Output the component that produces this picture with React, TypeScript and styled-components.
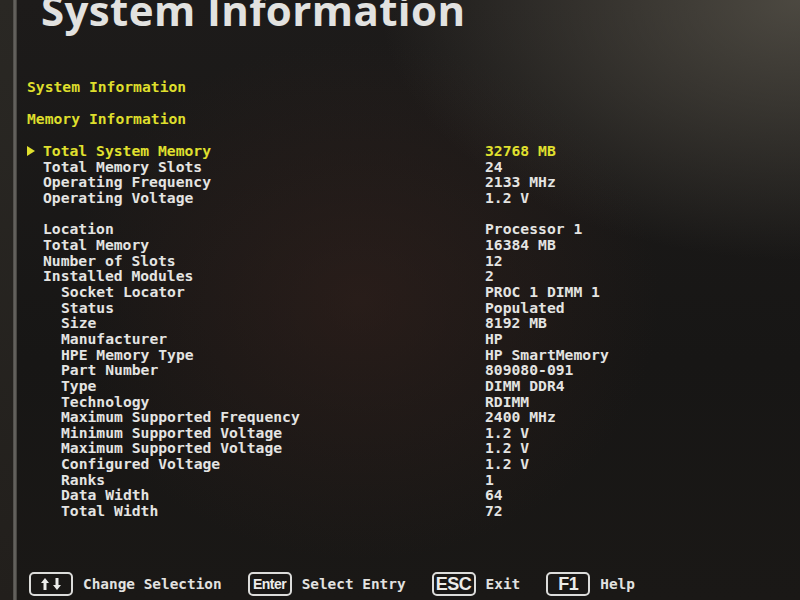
import styled, { createGlobalStyle } from "styled-components";

const GlobalStyle = createGlobalStyle`
  html, body {
    margin: 0;
    padding: 0;
    background: #141312;
    overflow: hidden;
  }
`;

const Screen = styled.div`
  display: flex;
  width: 800px;
  height: 600px;
  overflow: hidden;
  background:
    radial-gradient(ellipse 420px 260px at 800px 0px, rgba(92, 88, 78, 0.75), rgba(92, 88, 78, 0) 100%),
    radial-gradient(ellipse 300px 260px at 360px 300px, rgba(60, 36, 30, 0.45), rgba(60, 36, 30, 0) 100%),
    linear-gradient(180deg, #1d1b1a 0%, #171615 60%, #1a1816 100%);
`;

const Bezel = styled.div`
  width: 13px;
  flex-shrink: 0;
  background: linear-gradient(180deg, #2a2824 0%, #221f1c 100%);
`;

const BezelEdge = styled.div`
  width: 4px;
  flex-shrink: 0;
  background: linear-gradient(90deg, #4a4844 0%, #6c6a66 50%, #3c3a36 100%);
`;

const Main = styled.div`
  flex: 1;
  display: flex;
  flex-direction: column;
  padding-left: 10px;
  font-family: "DejaVu Sans Mono", "Liberation Mono", monospace;
  font-weight: bold;
  font-size: 14.7px;
`;

const Title = styled.h1`
  margin: -12px 0 0 14px;
  font-family: "Open Sans", "Noto Sans", sans-serif;
  font-weight: 700;
  font-size: 42px;
  line-height: 44px;
  color: #e2e2e0;
  letter-spacing: 0.4px;
  white-space: nowrap;
`;

const Heading = styled.div<{ $gap: number }>`
  color: #dede2c;
  line-height: 16px;
  height: 16px;
  margin-top: ${props => props.$gap}px;
`;

const List = styled.div`
  display: flex;
  flex-direction: column;
  margin-top: 16px;
`;

const Row = styled.div<{ $selected?: boolean; $spaced?: boolean }>`
  display: grid;
  grid-template-columns: 16px 442px 1fr;
  align-items: center;
  height: 15.66px;
  line-height: 15.66px;
  margin-top: ${props => (props.$spaced ? "15.66px" : "0")};
  color: ${props => (props.$selected ? "#e0e02e" : "#e4e4e2")};
  white-space: pre;
`;

const Marker = styled.span`
  display: flex;
  align-items: center;
  height: 100%;
`;

const Label = styled.span<{ $indent?: boolean }>`
  padding-left: ${props => (props.$indent ? "18px" : "0")};
`;

const Value = styled.span``;

const Footer = styled.div`
  margin-top: auto;
  display: flex;
  align-items: center;
  padding: 0 0 4px 2px;
  color: #e2e2e0;
  font-size: 14.4px;
`;

const Hint = styled.div`
  display: flex;
  align-items: center;
  gap: 10px;
  margin-right: 26px;
`;

const Key = styled.span<{ $size: number }>`
  display: flex;
  align-items: center;
  justify-content: center;
  box-sizing: border-box;
  width: 44px;
  height: 24px;
  border: 2px solid #dcdcda;
  border-radius: 5px;
  font-family: "Liberation Sans", "Open Sans", sans-serif;
  font-weight: 700;
  font-size: ${props => props.$size}px;
  letter-spacing: -0.5px;
  color: #ececea;
`;

type Item = { label: string; value: string; indent?: boolean; spaced?: boolean; selected?: boolean };

const items: Item[] = [
  { label: "Total System Memory", value: "32768 MB", selected: true },
  { label: "Total Memory Slots", value: "24" },
  { label: "Operating Frequency", value: "2133 MHz" },
  { label: "Operating Voltage", value: "1.2 V" },
  { label: "Location", value: "Processor 1", spaced: true },
  { label: "Total Memory", value: "16384 MB" },
  { label: "Number of Slots", value: "12" },
  { label: "Installed Modules", value: "2" },
  { label: "Socket Locator", value: "PROC 1 DIMM 1", indent: true },
  { label: "Status", value: "Populated", indent: true },
  { label: "Size", value: "8192 MB", indent: true },
  { label: "Manufacturer", value: "HP", indent: true },
  { label: "HPE Memory Type", value: "HP SmartMemory", indent: true },
  { label: "Part Number", value: "809080-091", indent: true },
  { label: "Type", value: "DIMM DDR4", indent: true },
  { label: "Technology", value: "RDIMM", indent: true },
  { label: "Maximum Supported Frequency", value: "2400 MHz", indent: true },
  { label: "Minimum Supported Voltage", value: "1.2 V", indent: true },
  { label: "Maximum Supported Voltage", value: "1.2 V", indent: true },
  { label: "Configured Voltage", value: "1.2 V", indent: true },
  { label: "Ranks", value: "1", indent: true },
  { label: "Data Width", value: "64", indent: true },
  { label: "Total Width", value: "72", indent: true },
];

function App() {
  return (
    <>
      <GlobalStyle />
      <Screen>
        <Bezel />
        <BezelEdge />
        <Main>
          <Title>System Information</Title>
          <Heading $gap={47}>System Information</Heading>
          <Heading $gap={16}>Memory Information</Heading>
          <List>
            {items.map(item => (
              <Row key={item.label + item.value} $selected={item.selected} $spaced={item.spaced}>
                <Marker>
                  {item.selected && (
                    <svg width="8" height="10" viewBox="0 0 8 10">
                      <polygon points="0,0 8,5 0,10" fill="#e0e02e" />
                    </svg>
                  )}
                </Marker>
                <Label $indent={item.indent}>{item.label}</Label>
                <Value>{item.value}</Value>
              </Row>
            ))}
          </List>
          <Footer>
            <Hint>
              <Key $size={16}>
                <svg width="24" height="14" viewBox="0 0 24 14">
                  <path d="M6 1 L10 6 H7.5 V13 H4.5 V6 H2 Z" fill="#ececea" />
                  <path d="M18 13 L22 8 H19.5 V1 H16.5 V8 H14 Z" fill="#ececea" />
                </svg>
              </Key>
              <span>Change Selection</span>
            </Hint>
            <Hint>
              <Key $size={14}>Enter</Key>
              <span>Select Entry</span>
            </Hint>
            <Hint>
              <Key $size={18}>ESC</Key>
              <span>Exit</span>
            </Hint>
            <Hint>
              <Key $size={18}>F1</Key>
              <span>Help</span>
            </Hint>
          </Footer>
        </Main>
      </Screen>
    </>
  );
}

export default App;
